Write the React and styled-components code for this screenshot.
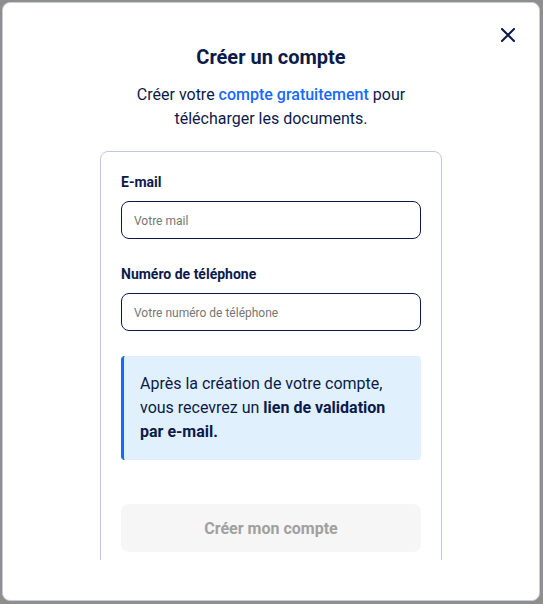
import React from 'react';
import styled, { createGlobalStyle } from 'styled-components';

const GlobalStyle = createGlobalStyle`
  html, body {
    margin: 0;
    padding: 0;
    background-color: #8e8e8e;
    font-family: Roboto, "Liberation Sans", sans-serif;
  }
  * {
    box-sizing: border-box;
  }
`;

const Overlay = styled.div`
  padding: 2px 3px 3px 2px;
  height: 604px;
`;

const Modal = styled.div`
  position: relative;
  height: 599px;
  background-color: #ffffff;
  border: 1px solid #c9cbe0;
  border-radius: 8px;
  padding: 40px 0 40px;
  display: flex;
  flex-direction: column;
`;

const CloseButton = styled.button`
  position: absolute;
  top: 25px;
  right: 24px;
  width: 14px;
  height: 14px;
  padding: 0;
  border: none;
  background: none;
  display: flex;
  cursor: pointer;
`;

const Content = styled.div`
  flex: 1;
  overflow: hidden;
  display: flex;
  flex-direction: column;
  align-items: center;
`;

const Title = styled.h2`
  margin: 0;
  font-size: 20px;
  line-height: 28px;
  font-weight: 700;
  color: #0c1a4b;
`;

const Subtitle = styled.p`
  margin: 12px 0 0;
  max-width: 300px;
  text-align: center;
  font-size: 16px;
  line-height: 24px;
  color: #0c1a4b;
`;

const Highlight = styled.span`
  color: #1769ff;
  font-weight: 500;
`;

const Card = styled.div`
  margin-top: 20px;
  width: 342px;
  flex-shrink: 0;
  border: 1px solid #c4c7df;
  border-radius: 8px;
  padding: 20px 20px 24px;
  display: flex;
  flex-direction: column;
`;

const Field = styled.div`
  display: flex;
  flex-direction: column;
  margin-bottom: 25px;
`;

const Label = styled.label`
  font-size: 14px;
  line-height: 20px;
  font-weight: 700;
  color: #0c1a4b;
  margin-bottom: 9px;
`;

const Input = styled.input`
  height: 38px;
  width: 100%;
  border: 1px solid #0c1a4b;
  border-radius: 8px;
  padding: 1px 12px 0;
  font-family: Roboto, "Liberation Sans", sans-serif;
  font-size: 12px;
  color: #0c1a4b;
  background: #ffffff;
  outline: none;

  &::placeholder {
    color: #767676;
  }
`;

const InfoBox = styled.div`
  background-color: #e0f0fd;
  border-left: 3px solid #1769ff;
  border-radius: 4px;
  padding: 16px;
  font-size: 16px;
  line-height: 24px;
  color: #0c1a4b;
`;

const Strong = styled.strong`
  font-weight: 700;
`;

const SubmitButton = styled.button`
  margin-top: 44px;
  height: 48px;
  width: 100%;
  border: none;
  border-radius: 8px;
  background-color: #f6f6f6;
  color: #a0a0a0;
  font-family: Roboto, "Liberation Sans", sans-serif;
  font-size: 16px;
  font-weight: 700;
  cursor: not-allowed;
`;

const CloseIcon = () => (
  <svg width="14" height="14" viewBox="0 0 14 14" fill="none">
    <path d="M1 1 L13 13 M13 1 L1 13" stroke="#0c1a4b" strokeWidth="2" strokeLinecap="square" />
  </svg>
);

const App = () => {
  return (
    <>
      <GlobalStyle />
      <Overlay>
        <Modal>
          <CloseButton aria-label="Fermer">
            <CloseIcon />
          </CloseButton>
          <Content>
            <Title>Créer un compte</Title>
            <Subtitle>
              Créer votre <Highlight>compte gratuitement</Highlight> pour télécharger les documents.
            </Subtitle>
            <Card>
              <Field>
                <Label>E-mail</Label>
                <Input type="email" placeholder="Votre mail" />
              </Field>
              <Field>
                <Label>Numéro de téléphone</Label>
                <Input type="tel" placeholder="Votre numéro de téléphone" />
              </Field>
              <InfoBox>
                Après la création de votre compte, vous recevrez un{' '}
                <Strong>lien de validation par e-mail.</Strong>
              </InfoBox>
              <SubmitButton disabled>Créer mon compte</SubmitButton>
            </Card>
          </Content>
        </Modal>
      </Overlay>
    </>
  );
};

export default App;
